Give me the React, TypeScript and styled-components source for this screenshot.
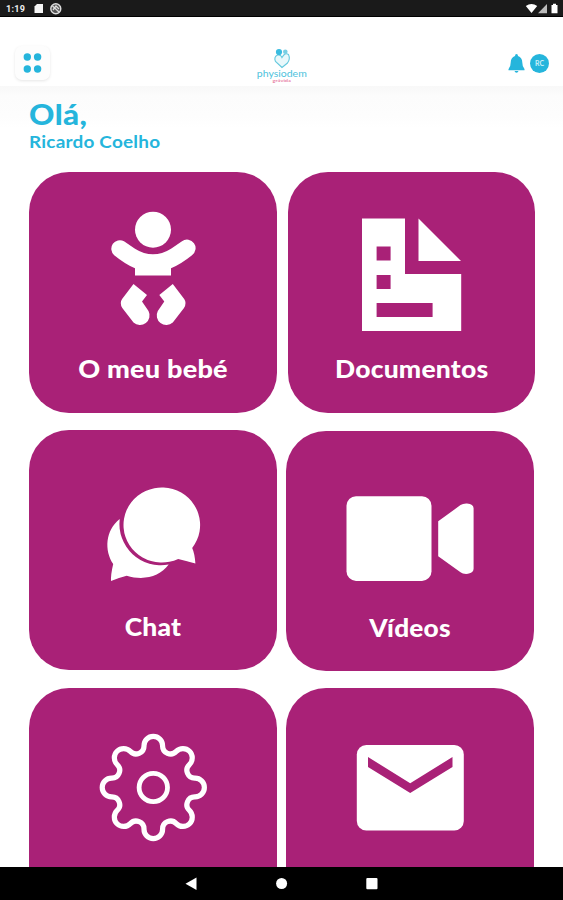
import React from "react";
import styled, { createGlobalStyle } from "styled-components";

const PURPLE = "#a92177";
const CYAN = "#25b5dc";

const GlobalStyle = createGlobalStyle`
  * { box-sizing: border-box; }
  body { margin: 0; background: #fff; font-family: Lato, "Liberation Sans", sans-serif; }
  svg { display: block; }
`;

const Screen = styled.div`
  width: 563px;
  height: 900px;
  display: flex;
  flex-direction: column;
  overflow: hidden;
  background: #fff;
`;

const StatusBar = styled.div`
  height: 17px;
  flex: none;
  display: flex;
  justify-content: space-between;
  background: #1a1a1a;
  border-bottom: 1px solid #000;
`;

const StatusGroup = styled.div`
  display: flex;
  align-items: center;
`;

const Clock = styled.span`
  width: 33px;
  padding: 2px 0 0 6px;
  font: 700 9px/12px Roboto, sans-serif;
  letter-spacing: 0.3px;
  color: #eee;
`;

const Header = styled.header`
  height: 69px;
  flex: none;
  display: grid;
  grid-template-columns: 1fr auto 1fr;
  padding: 29px 14px 0 15px;
  background: #fff;
`;

const MenuButton = styled.button`
  width: 35px;
  height: 34px;
  padding: 0;
  border: 0;
  border-radius: 7px;
  background: #fdfdfd;
  box-shadow: 0 1px 3px rgba(0, 0, 0, 0.1);
`;

const Actions = styled.div`
  display: flex;
  justify-content: flex-end;
  gap: 5px;
  padding-top: 7px;
`;

const Avatar = styled.div`
  width: 19px;
  height: 19px;
  margin-top: 0.5px;
  border-radius: 50%;
  background: ${CYAN};
  color: #c9eff9;
  font-size: 7px;
  font-weight: 700;
  line-height: 19px;
  text-align: center;
`;

const Content = styled.main`
  flex: 1;
  min-height: 0;
  overflow: hidden;
  padding: 0 0 0 29.3px;
  background: linear-gradient(#f8f8f8, #fcfcfc 10px, #fdfdfd 30px, #fff 42px);
`;

const Greeting = styled.div`
  height: 86px;
  padding-top: 11px;
  color: ${CYAN};
`;

const Hello = styled.h1`
  margin: 0;
  font-size: 28.5px;
  line-height: 34px;
  font-weight: 900;
  letter-spacing: 0.4px;
  transform: scaleX(1.1);
  transform-origin: left;
`;

const Name = styled.p`
  margin: 0;
  font-size: 17.5px;
  line-height: 22px;
  font-weight: 700;
  letter-spacing: 0.2px;
  transform: scaleX(1.082);
  transform-origin: left;
`;

const Row = styled.div`
  display: flex;
  height: 240.5px;
  margin-bottom: 17.4px;
`;

const Card = styled.section<{ $gap?: number; $width?: number; $drop?: number }>`
  flex: none;
  width: ${(p) => p.$width ?? 248}px;
  height: 240.5px;
  margin: ${(p) => p.$drop ?? 0}px 0 0 ${(p) => p.$gap ?? 0}px;
  border-radius: 40px;
  background: ${PURPLE};
  overflow: hidden;
`;

const Label = styled.div<{ $stretch: number }>`
  height: 34px;
  font-size: 24.5px;
  line-height: 34px;
  font-weight: 900;
  text-align: center;
  letter-spacing: 0.2px;
  color: #fff;
  transform: scaleX(${(p) => p.$stretch});
`;

const NavBar = styled.nav`
  height: 33px;
  flex: none;
  background: #000;
`;

function gearPath() {
  const rot = (x: number, y: number, deg: number) => {
    const a = (deg * Math.PI) / 180;
    return `${(x * Math.cos(a) - y * Math.sin(a)).toFixed(2)} ${(x * Math.sin(a) + y * Math.cos(a)).toFixed(2)}`;
  };
  let d = `M${rot(-9.3, -41.77, 0)}`;
  for (let i = 0; i < 8; i++) {
    d += `A9.3 9.3 0 1 1 ${rot(9.3, -41.77, i * 45)}`;
    d += `A7.9 7.9 0 0 0 ${rot(-9.3, -41.77, (i + 1) * 45)}`;
  }
  return d + "Z";
}

const BabyIcon = () => (
  <svg width="248" height="180" viewBox="29 172 248 180" fill="#fff">
    <circle cx="153" cy="229.7" r="18" />
    <path d="M124 241.2L135 248.7Q153 260 171 248.7L182 241.2A8.6 8.6 0 0 1 192 255.2Q181 264 171 268.3V275.6H135V268.3Q125 264 114.2 255.2A8.6 8.6 0 0 1 124 241.2Z" />
    <path d="M133.5 284L147 295L142 301.5L148.5 311A9.6 9.6 0 0 1 133.5 322.5L122.3 308Q119.3 303 122.1 299Z" />
    <path d="M172.8 284L159.3 295L164.3 301.5L157.8 311A9.6 9.6 0 0 0 172.8 322.5L184 308Q187 303 184.2 299Z" />
  </svg>
);

const DocumentIcon = () => (
  <svg width="248" height="180" viewBox="288 172 248 180" fill="#fff">
    <path fillRule="evenodd" d="M362 218.5H405V274H461.2V331H362ZM376.6 246.5V260.5H390.6V246.5ZM376.6 275V289H390.6V275ZM376.6 303V317H432.6V303Z" />
    <path d="M418.5 218.5L461 261H418.5Z" />
  </svg>
);

const ChatIcon = () => (
  <svg width="248" height="180" viewBox="29.3 429.6 248 180" fill="#fff">
    <path d="M120 518.5A41.5 41.5 0 0 0 169 564.2C160 576.5 144 580.5 127 575.3Q120 577 111.3 580.6Q111 574 113.5 563.5C104.5 550 105.5 530 120 518.5Z" />
    <path d="M195.7 563Q188 561 178.5 558.6A38.3 37.6 0 1 1 192.5 547.5Q195 553 195.7 563Z" />
  </svg>
);

const VideoIcon = () => (
  <svg width="248" height="180" viewBox="286 430.7 248 180" fill="#fff">
    <rect x="346.5" y="496" width="85" height="84.6" rx="9.5" />
    <path d="M438.2 521L460.5 504.8Q463 503 467 503.2Q473.6 504 473.6 508V568.5Q473.6 572.5 468 573.5Q463 574 460.5 572L438.2 556Z" />
  </svg>
);

const GearIcon = () => (
  <svg width="248" height="180" viewBox="29 688 248 180" fill="none" stroke="#fff">
    <g transform="translate(153.3 787.5)">
      <path d={gearPath()} strokeWidth="5.2" />
      <circle r="14.2" strokeWidth="4.8" />
    </g>
  </svg>
);

const MailIcon = () => (
  <svg width="248" height="180" viewBox="286 688 248 180">
    <rect x="356.8" y="745" width="107" height="85.5" rx="9.5" fill="#fff" />
    <path d="M368 757L410.2 783.3L452.5 757V767L410.2 793L368 767Z" fill={PURPLE} />
  </svg>
);

const Logo = () => (
  <svg width="56" height="40" viewBox="254 44 56 40">
    <path d="M282 65.5L275.5 59.5Q273.5 55 277.5 53Q281 52.5 282 55.5Q285 50 288.5 52.5Q290.5 57 287.5 61Z" fill="#e9f8fb" stroke="#65c9de" strokeWidth="1.1" />
    <circle cx="279" cy="50" r="3.1" fill="#3abce0" />
    <circle cx="285.3" cy="49.8" r="2.3" fill="#78cfe4" />
    <text x="256.8" y="74.8" fontSize="9.6" textLength="50" lengthAdjust="spacingAndGlyphs" fill="#4ec2dc">physiodem</text>
    <text x="272.5" y="80" fontSize="4.5" fontWeight="700" textLength="18.5" lengthAdjust="spacingAndGlyphs" fill="#e884a6">grávida</text>
  </svg>
);

export default function App() {
  return (
    <Screen>
      <GlobalStyle />
      <StatusBar>
        <StatusGroup>
          <Clock>1:19</Clock>
          <svg width="32" height="16" viewBox="33 0 32 16">
            <path d="M37 4H43V13H34.5V6.5Z" fill="#f5f5f5" />
            <circle cx="55.8" cy="8.8" r="5" fill="#555" stroke="#ddd" strokeWidth="1.4" />
            <path d="M52.5 6L59 12M53 10L56 6L59 9" stroke="#ddd" strokeWidth="1.3" fill="none" />
          </svg>
        </StatusGroup>
        <StatusGroup>
          <svg width="38" height="16" viewBox="525 0 38 16" fill="#fff">
            <path d="M525.8 6Q531.5 1.8 537.2 6L531.5 13Z" />
            <path d="M538 13.3L547 4V13.3Z" fill="#bbb" />
            <path d="M551.5 5H553V3.8H556V5H557.5V13.3H551.5Z" />
          </svg>
        </StatusGroup>
      </StatusBar>
      <Header>
        <MenuButton aria-label="Menu">
          <svg width="35" height="34" viewBox="15 46 35 34" fill={CYAN}>
            <circle cx="27.3" cy="57" r="3.7" />
            <circle cx="37.6" cy="57" r="3.7" />
            <circle cx="27.3" cy="69" r="3.7" />
            <circle cx="37.6" cy="69" r="3.7" />
          </svg>
        </MenuButton>
        <Logo />
        <Actions>
          <svg width="17" height="20" viewBox="508 53 17 20" fill={CYAN}>
            <path d="M516.5 54Q518 54 518 56Q522.3 57.5 522.3 62.5Q522.3 67 524.5 69V70.2H508.5V69Q510.7 67 510.7 62.5Q510.7 57.5 515 56Q515 54 516.5 54Z" />
            <path d="M514.5 71H518.5Q518 72.8 516.5 72.8Q515 72.8 514.5 71Z" />
          </svg>
          <Avatar>RC</Avatar>
        </Actions>
      </Header>
      <Content>
        <Greeting>
          <Hello>Olá,</Hello>
          <Name>Ricardo Coelho</Name>
        </Greeting>
        <Row>
          <Card>
            <BabyIcon />
            <Label $stretch={1.105}>O meu bebé</Label>
          </Card>
          <Card $gap={10.4} $width={247.3}>
            <DocumentIcon />
            <Label $stretch={1.08}>Documentos</Label>
          </Card>
        </Row>
        <Row>
          <Card>
            <ChatIcon />
            <Label $stretch={1.08}>Chat</Label>
          </Card>
          <Card $gap={8.7} $drop={0.7}>
            <VideoIcon />
            <Label $stretch={1.07}>Vídeos</Label>
          </Card>
        </Row>
        <Row>
          <Card>
            <GearIcon />
          </Card>
          <Card $gap={8.7}>
            <MailIcon />
          </Card>
        </Row>
      </Content>
      <NavBar>
        <svg width="563" height="33" viewBox="0 867 563 33" fill="#fff">
          <path d="M185.5 883.7L196.5 877.5V890Z" />
          <circle cx="281.6" cy="883.5" r="5.5" />
          <rect x="366.3" y="878" width="11.2" height="11.3" rx="1" />
        </svg>
      </NavBar>
    </Screen>
  );
}
